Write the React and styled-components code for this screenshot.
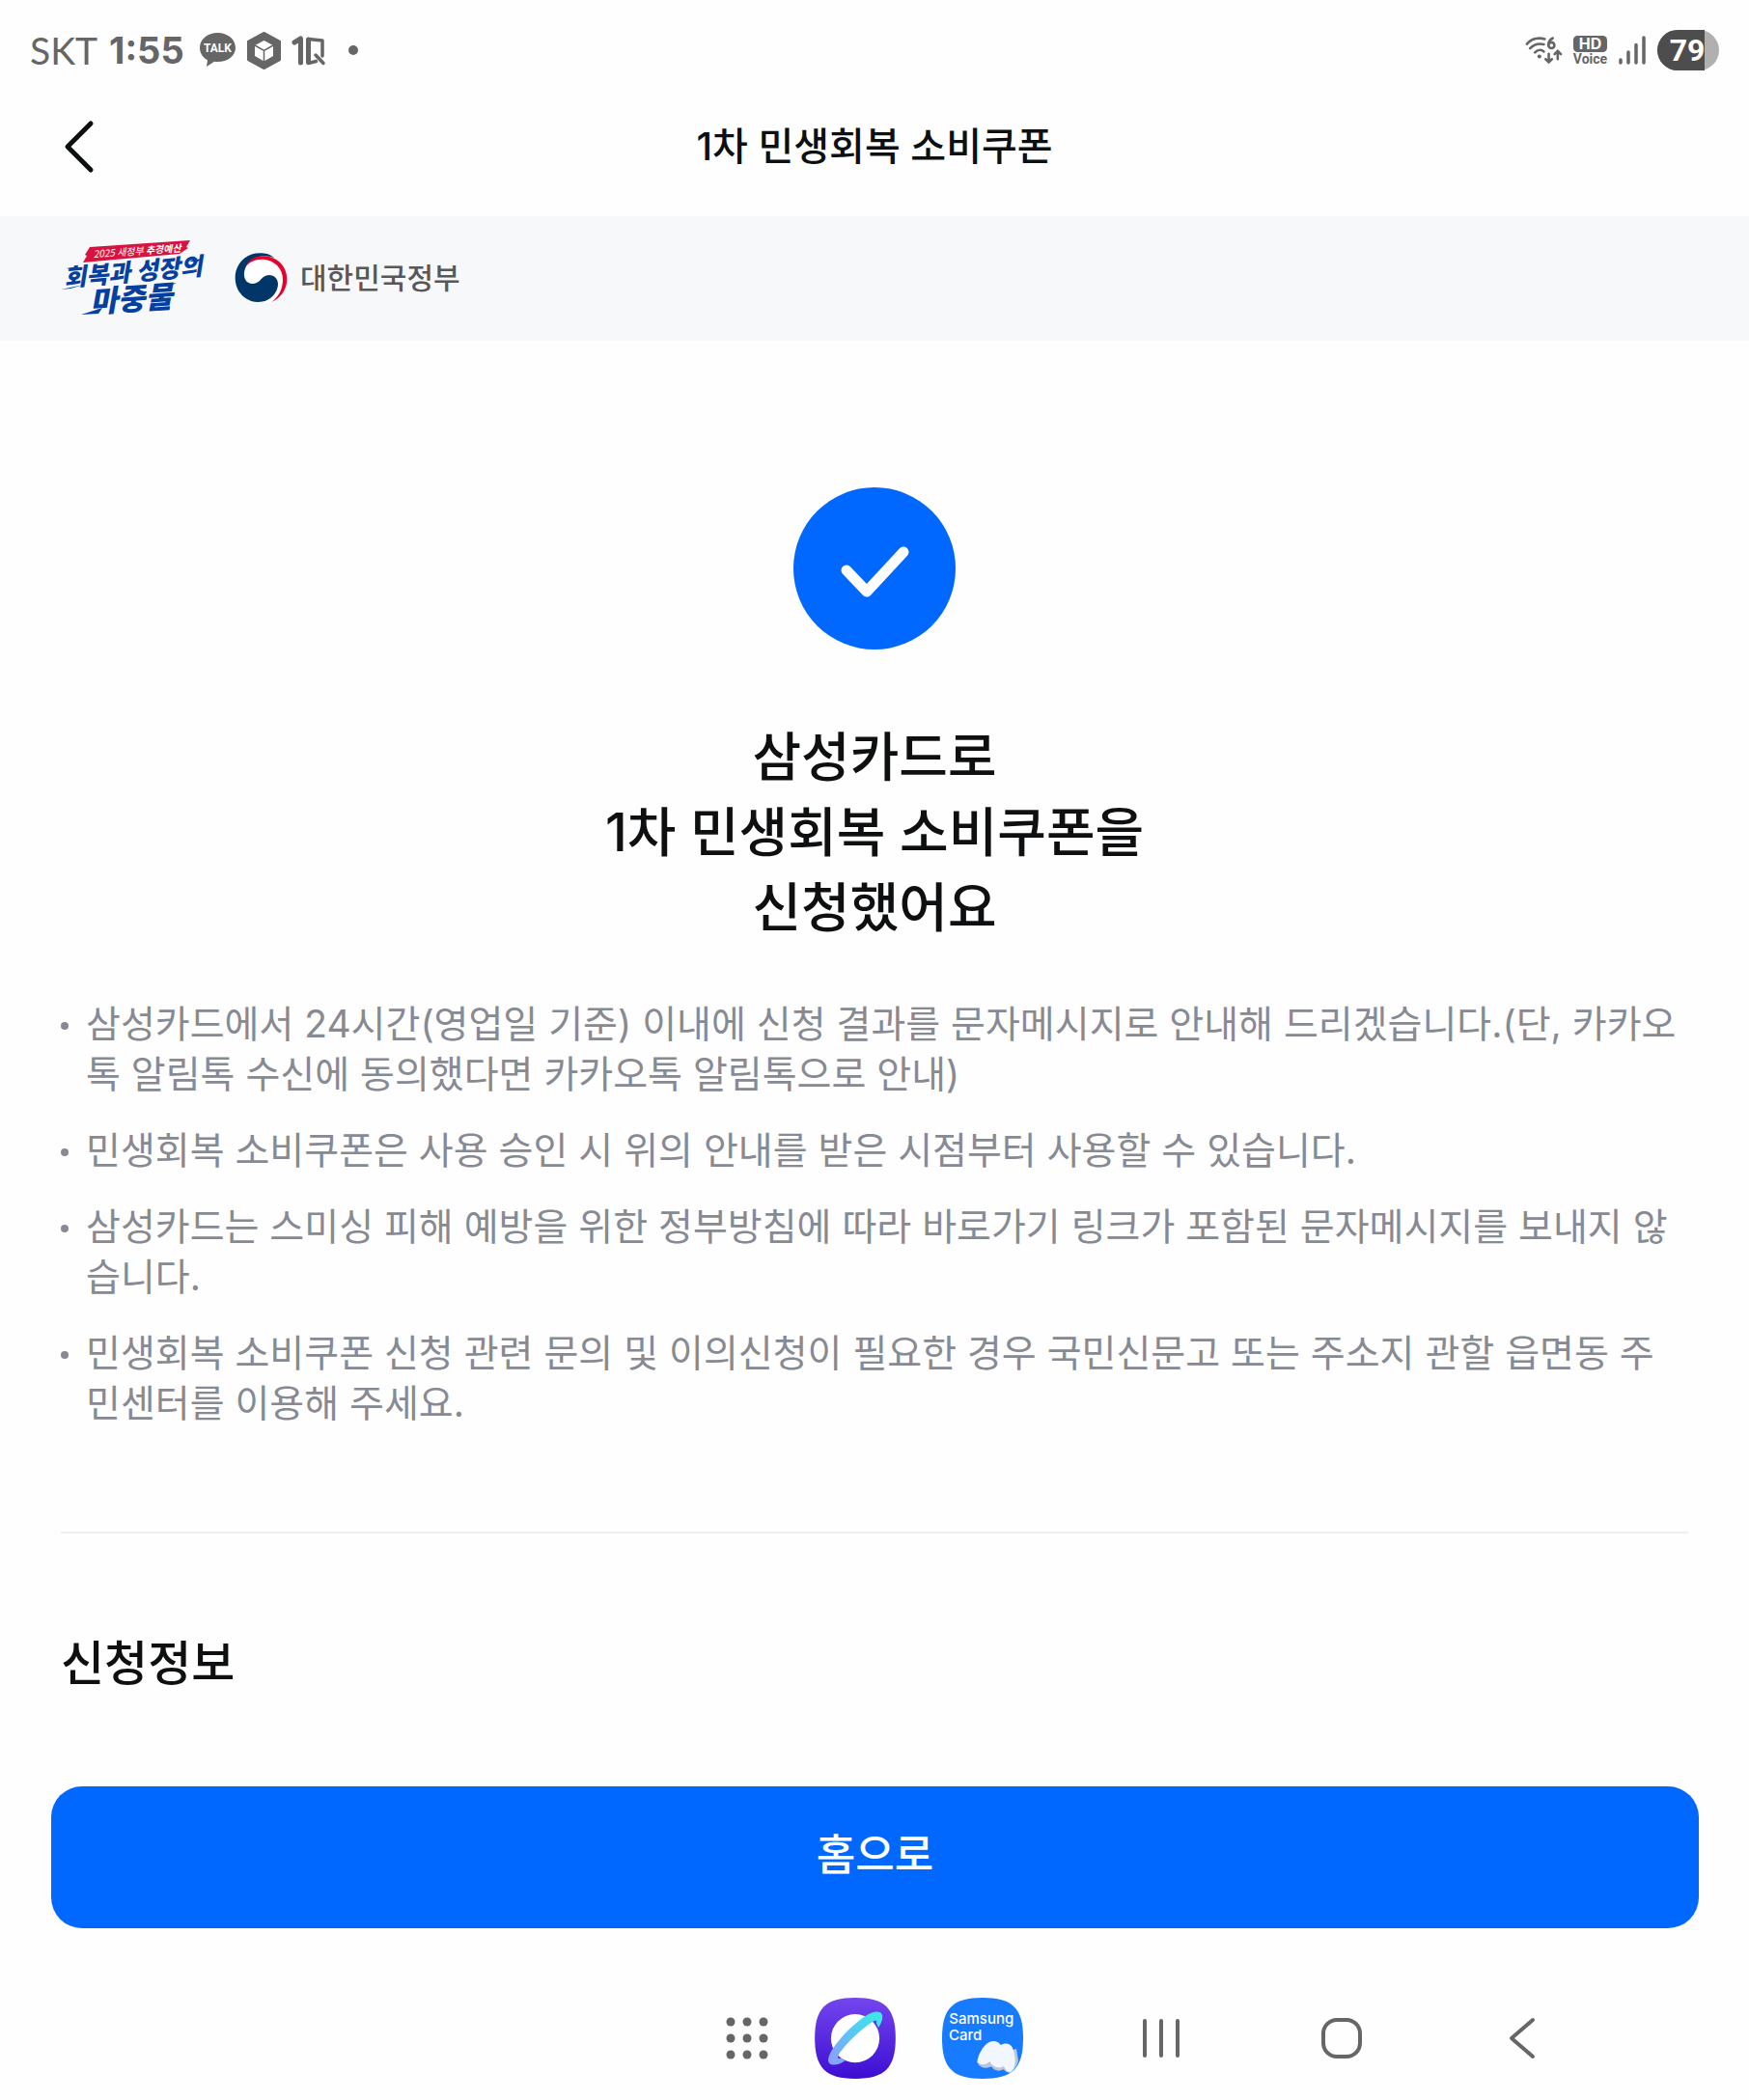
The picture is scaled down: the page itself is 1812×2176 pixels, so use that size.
import React from 'react'
import styled, { createGlobalStyle } from 'styled-components'

const GlobalStyle = createGlobalStyle`
  * {
    box-sizing: border-box;
  }

  body {
    margin: 0;
    background: #fefefe;
    color: #0d0f10;
    font-family: Inter, "Noto Sans CJK KR", sans-serif;
  }

  svg {
    display: block;
    flex: none;
    overflow: visible;
  }

  h1, h2, p, ul {
    margin: 0;
    padding: 0;
  }
`;

const Page = styled.div`
  display: flex;
  flex-direction: column;
  min-height: 100vh;
`;

const StatusBar = styled.div`
  display: flex;
  align-items: center;
  justify-content: space-between;
  height: 104px;
  padding: 0 31px;
  color: #666;
`;

const StatusGroup = styled.div`
  display: flex;
  align-items: center;
  gap: 12px;
`;

const Carrier = styled.span`
  font: 400 39px/48px Lato, sans-serif;
`;

const Clock = styled.span`
  font-size: 38px;
  line-height: 48px;
  font-weight: 700;
  margin-right: 4px;
`;

const Header = styled.header`
  display: grid;
  grid-template-columns: 120px 1fr 120px;
  align-items: center;
  height: 120px;
  padding-bottom: 24px;
`;

const IconButton = styled.button`
  display: flex;
  align-items: center;
  justify-content: center;
  padding: 0;
  border: 0;
  background: none;
  color: ${props => props.$color || '#666'};
  cursor: pointer;
`;

const BackButton = styled(IconButton)`
  width: 100px;
  height: 80px;
  margin-left: 32px;
`;

const NavKey = styled(IconButton)`
  width: 60px;
  height: 60px;
`;

const Title = styled.h1`
  text-align: center;
  font-size: 40px;
  line-height: 52px;
  font-weight: 500;
`;

const LogoBand = styled.div`
  display: flex;
  align-items: center;
  height: 129px;
  padding: 0 63px 2px;
  gap: 32px;
  background: #f7f8fa;
`;

const Government = styled.div`
  display: flex;
  align-items: center;
  gap: 12px;
  color: #595757;
  font-size: 30px;
  line-height: 40px;
  font-weight: 500;
`;

const Content = styled.main`
  flex: 1;
  padding: 152px 63px 0;
`;

const Result = styled.section`
  display: flex;
  flex-direction: column;
  align-items: center;
  gap: 72px;
`;

const Message = styled.h2`
  text-align: center;
  font-size: 55px;
  line-height: 78px;
  font-weight: 500;
`;

const Notices = styled.ul`
  display: flex;
  flex-direction: column;
  gap: 27px;
  margin-top: 56px;
  list-style: none;
`;

const Notice = styled.li`
  display: flex;
  gap: 18px;
  color: #878a93;
  font-size: 39px;
  line-height: 52px;

  &::before {
    content: "";
    flex: none;
    width: 8px;
    height: 8px;
    margin-top: 24px;
    border-radius: 50%;
    background: #878a93;
  }
`;

const Divider = styled.hr`
  height: 2px;
  margin: 107px 0 99px;
  border: 0;
  background: #efeff0;
`;

const SectionTitle = styled.h2`
  font-size: 49px;
  line-height: 72px;
  font-weight: 500;
`;

const Footer = styled.footer`
  padding: 0 52px 51px 53px;
`;

const HomeButton = styled.button`
  display: block;
  width: 100%;
  height: 147px;
  padding: 0 0 12px;
  border: 0;
  border-radius: 32px;
  background: #0068ff;
  color: #fff;
  font: inherit;
  font-size: 44px;
  font-weight: 500;
  cursor: pointer;
`;

const Taskbar = styled.nav`
  display: grid;
  grid-template-columns: 1fr auto 1fr;
  align-items: center;
  height: 127px;
  padding-bottom: 2px;
`;

const Apps = styled.div`
  grid-column: 2;
  display: flex;
  align-items: center;
  gap: 48px;
`;

const NavKeys = styled.div`
  display: flex;
  align-items: center;
  padding-left: 113px;
  gap: 127px;
`;

const notices = [
  '삼성카드에서 24시간(영업일 기준) 이내에 신청 결과를 문자메시지로 안내해 드리겠습니다.(단, 카카오톡 알림톡 수신에 동의했다면 카카오톡 알림톡으로 안내)',
  '민생회복 소비쿠폰은 사용 승인 시 위의 안내를 받은 시점부터 사용할 수 있습니다.',
  '삼성카드는 스미싱 피해 예방을 위한 정부방침에 따라 바로가기 링크가 포함된 문자메시지를 보내지 않습니다.',
  '민생회복 소비쿠폰 신청 관련 문의 및 이의신청이 필요한 경우 국민신문고 또는 주소지 관할 읍면동 주민센터를 이용해 주세요.',
]

const TalkIcon = () => (
  <svg width="37" height="36" viewBox="0 0 37 36" fill="#666">
    <path d="M18.500 0C8 0 0 6.600 0 15.500c0 5.500 3.200 10 8 12.800L7 35l8-5.200c1 .2 2.300.2 3.500.2C29 30 37 24 37 15.500S29 0 18.500 0z" />
    <text x="18.500" y="20" textAnchor="middle" fontFamily="Roboto, sans-serif" fontSize="12" fontWeight="700" fill="#fefefe">TALK</text>
  </svg>
)

const BoxIcon = () => (
  <svg width="35" height="39" viewBox="0 0 35 39">
    <path d="M17.500 1 34 10v19l-16.500 9L1 29V10z" fill="#666" stroke="#666" strokeWidth="2" strokeLinejoin="round" />
    <path d="M17.500 9 27 14v11l-9.500 5.500L8 25V14z" fill="#fefefe" />
    <path d="M8 14l9.500 5.500L27 14M17.500 19.500V31" fill="none" stroke="#666" strokeWidth="1.500" />
  </svg>
)

const OneQIcon = () => (
  <svg width="34" height="31" viewBox="0 0 34 31" fill="none" stroke="#666" strokeLinecap="round" strokeLinejoin="round">
    <path d="M2 7l6.500-4v25" strokeWidth="5" />
    <path d="M16.500 4v23.500" strokeWidth="5" />
    <path d="M16.500 3.500L31 5v16M16.500 28.500l8-2M24 20l8 8.500" strokeWidth="3.500" />
  </svg>
)

const WifiIcon = () => (
  <svg width="38" height="32" viewBox="0 0 41 32" fill="none" stroke="#666" strokeWidth="2.800" strokeLinecap="round">
    <path d="M2 9C7 3.500 14 1.500 22 3.500M5.500 14C10 9.500 15 8 21 9.500M11 18.500c3-3 7-3.500 10-1" />
    <circle cx="16" cy="23" r="2.200" fill="#666" stroke="none" />
    <path d="M31 2.500c-4 2-5 5-5 8" />
    <circle cx="29.500" cy="10.500" r="3.300" />
    <path d="M26.500 20v9M23 26l3.500 3.500L30 26M36.500 26v-8.500M33 20.500l3.500-3.500 3.500 3.500" />
  </svg>
)

const HdVoiceIcon = () => (
  <svg width="35" height="32" viewBox="0 0 35 32">
    <rect y="1" width="35" height="17" rx="4.500" fill="#666" />
    <text x="17.500" y="15" textAnchor="middle" fontFamily="Inter, sans-serif" fontSize="16" fontWeight="700" fill="#fefefe">HD</text>
    <text x="17.500" y="30" textAnchor="middle" fontFamily="Roboto, sans-serif" fontSize="14" fontWeight="700" fill="#666">Voice</text>
  </svg>
)

const SignalIcon = () => (
  <svg width="28" height="30" viewBox="0 0 28 30" stroke="#666" strokeWidth="3.500" strokeLinecap="round">
    <path d="M2 25v3M10 17v11M18 9.500V28M26 2v26" />
  </svg>
)

const BatteryIcon = () => (
  <svg width="64" height="42" viewBox="0 0 64 42">
    <path d="M21 0h22a21 21 0 0 1 0 42H21a21 21 0 0 1 0-42z" fill="#b0b0b0" />
    <path d="M21 0h28v42H21a21 21 0 0 1 0-42z" fill="#4d4d4d" />
    <text x="31" y="32" textAnchor="middle" fontFamily="Roboto, sans-serif" fontSize="32" fontWeight="700" fill="#fff">79</text>
  </svg>
)

const CampaignLogo = () => (
  <svg width="148" height="78" viewBox="0 0 148 78" fontFamily="'Noto Sans CJK KR', sans-serif">
    <path d="M23 23l4-7-2-1 5-8L134 0l-4 7 2 1-9 6z" fill="#d71440" />
    <g fill="#fff" fontSize="10" fontStyle="italic" transform="rotate(-4 34 18)">
      <text x="34" y="18">2025 새정부 <tspan fontWeight="700">추경예산</tspan></text>
    </g>
    <g fill="#0540a0" fontWeight="900" fontStyle="italic">
      <text x="4" y="48" fontSize="25" transform="rotate(-5 4 48)">회복과 성장의</text>
      <text x="31" y="75" fontSize="31" transform="rotate(-4 31 75)">마중물</text>
      <path d="M0 51l24-5-14 4zM6 29l12-2-8 3zM132 21l15-2-7 4zM21 77l22-7-4 6zM100 47l20-3-8 4z" />
    </g>
  </svg>
)

const Emblem = () => (
  <svg width="56" height="53" viewBox="22 20 168 159">
    <path d="M52 95C50 60 80 40 112 40c35 3 62 30 62 65 0 35-14 56-36 72l-40 2z" fill="#fff" />
    <path d="M100 24C55 24 24 60 24 100c0 45 34 76 71 76 40 0 62-31 62-56 0-16-11-28-28-28-24 0-26 27-50 27-19 0-29-14-27-34 3-30 28-49 58-52 15-1 29 3 36 6-12-11-28-15-46-15z" fill="#003668" />
    <path d="M55 68c10-25 35-36 60-35 40 3 70 32 70 72 0 35-25 63-48 71 23-17 35-41 35-71 0-35-27-59-60-62-27-1-44 8-57 25z" fill="#e6002d" />
  </svg>
)

const CheckIcon = () => (
  <svg width="168" height="168" viewBox="0 0 168 168">
    <circle cx="84" cy="84" r="84" fill="#0068ff" />
    <path d="M55 86l21 22 38-41" fill="none" stroke="#fff" strokeWidth="11" strokeLinecap="round" strokeLinejoin="round" />
  </svg>
)

const InternetIcon = () => (
  <svg width="84" height="84" viewBox="376 60 250 251">
    <defs>
      <linearGradient id="space" x1="0" y1="0" x2="0" y2="1">
        <stop offset="0" stopColor="#7445ee" />
        <stop offset="1" stopColor="#3d0ed2" />
      </linearGradient>
      <linearGradient id="ring" x1="1" y1="0" x2="0" y2="1">
        <stop offset="0" stopColor="#34f0e6" />
        <stop offset=".5" stopColor="#5cc4f4" />
        <stop offset="1" stopColor="#8f9cff" />
      </linearGradient>
    </defs>
    <path d="M501 60c92 0 125 33 125 125s-33 126-125 126-125-34-125-126S409 60 501 60z" fill="url(#space)" />
    <circle cx="501" cy="186" r="75" fill="#fff" />
    <path d="M470 255c-20 15-45 17-51 5-11-25 51-100 111-142 30-20 52-18 55-3 2 13-5 27-12 38l-7-15c4-6 0-9-6-6-40 23-90 73-110 104-6 10 0 14 8 11z" fill="url(#ring)" />
  </svg>
)

const SamsungCardIcon = () => (
  <svg width="84" height="84" viewBox="22 18 252 252">
    <path d="M148 18c93 0 126 33 126 126s-33 126-126 126S22 237 22 144 55 18 148 18z" fill="#167bff" />
    <text fontFamily="Inter, sans-serif" fontSize="45" fontWeight="500" fill="#fff">
      <tspan x="44" y="99">Samsung</tspan>
      <tspan x="43" y="151">Card</tspan>
    </text>
    <path d="M133 224c10 12 28 16 42 8 8 12 22 17 38 9 6 8 14 11 23 10 12-11 20-23 23-37l-6-38z" fill="#b9c5da" />
    <path d="M131 220c2-26 20-55 38-64 13-6 28-3 35 9 12-8 30-6 36 7 10 22 12 50 4 66-3 6-7 9-11 12-9-3-16-10-19-20-7 6-16 7-25 3-9-3-15-9-19-17-9 10-24 13-39 4z" fill="#f1f6ff" />
  </svg>
)

const AppsIcon = () => (
  <svg width="44" height="44" viewBox="0 0 44 44" fill="#666">
    {[5, 22, 39].map(y => [5, 22, 39].map(x => (
      <circle key={`${x}-${y}`} cx={x} cy={y} r="4.500" />
    )))}
  </svg>
)

const App = () => {

  return (
    <>
      <GlobalStyle />
      <Page>
        <StatusBar>
          <StatusGroup>
            <Carrier>SKT</Carrier>
            <Clock>1:55</Clock>
            <TalkIcon />
            <BoxIcon />
            <OneQIcon />
            <svg width="34" height="10"><circle cx="17" cy="5" r="5" fill="#666" /></svg>
          </StatusGroup>
          <StatusGroup>
            <WifiIcon />
            <HdVoiceIcon />
            <SignalIcon />
            <BatteryIcon />
          </StatusGroup>
        </StatusBar>

        <Header>
          <BackButton $color="#0d0f10" aria-label="뒤로">
            <svg width="30" height="54" viewBox="0 0 30 54" fill="none" stroke="currentColor" strokeWidth="5" strokeLinecap="round" strokeLinejoin="round">
              <path d="M27 3L3 27l24 24" />
            </svg>
          </BackButton>
          <Title>1차 민생회복 소비쿠폰</Title>
        </Header>

        <LogoBand>
          <CampaignLogo />
          <Government>
            <Emblem />
            대한민국정부
          </Government>
        </LogoBand>

        <Content>
          <Result>
            <CheckIcon />
            <Message>
              삼성카드로<br />
              1차 민생회복 소비쿠폰을<br />
              신청했어요
            </Message>
          </Result>

          <Notices>
            {notices.map(text => (
              <Notice key={text}><p>{text}</p></Notice>
            ))}
          </Notices>

          <Divider />

          <SectionTitle>신청정보</SectionTitle>
        </Content>

        <Footer>
          <HomeButton>홈으로</HomeButton>
        </Footer>

        <Taskbar>
          <Apps>
            <IconButton aria-label="앱스"><AppsIcon /></IconButton>
            <IconButton aria-label="인터넷"><InternetIcon /></IconButton>
            <IconButton aria-label="삼성카드"><SamsungCardIcon /></IconButton>
          </Apps>
          <NavKeys>
            <NavKey aria-label="최근 앱">
              <svg width="38" height="42" viewBox="0 0 38 42" stroke="currentColor" strokeWidth="4" strokeLinecap="round">
                <path d="M2 3v36M19 3v36M36 3v36" />
              </svg>
            </NavKey>
            <NavKey aria-label="홈">
              <svg width="42" height="42" viewBox="0 0 42 42" fill="none" stroke="currentColor" strokeWidth="4">
                <rect x="2" y="2" width="38" height="38" rx="14" />
              </svg>
            </NavKey>
            <NavKey aria-label="이전">
              <svg width="28" height="42" viewBox="0 0 28 42" fill="none" stroke="currentColor" strokeWidth="4" strokeLinecap="round" strokeLinejoin="round">
                <path d="M25 2L3 21l22 19" />
              </svg>
            </NavKey>
          </NavKeys>
        </Taskbar>
      </Page>
    </>
  )
}

export default App
